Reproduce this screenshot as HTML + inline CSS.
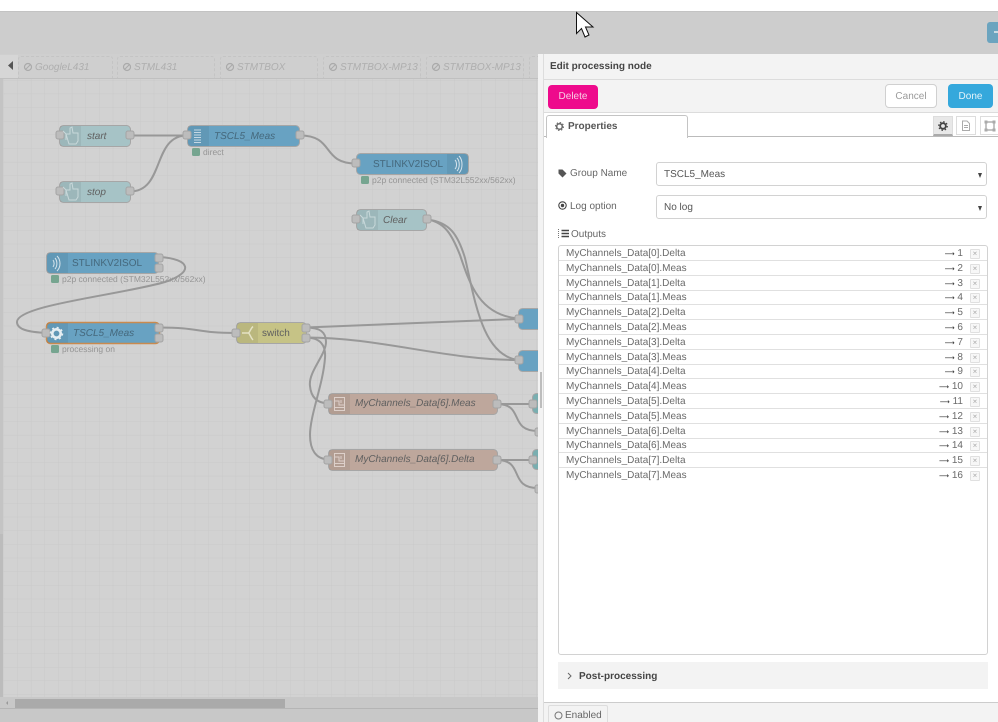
<!DOCTYPE html>
<html><head><meta charset="utf-8">
<style>
html,body{margin:0;padding:0;width:998px;height:722px;overflow:hidden;background:#fff;font-family:"Liberation Sans",sans-serif;text-rendering:geometricPrecision;}
svg text{text-rendering:geometricPrecision}
.a{position:absolute}
#stage{position:relative;width:998px;height:722px;overflow:hidden}
.tab{position:absolute;top:56px;height:22px;border:1px dashed #c4c4c4;border-bottom:none;border-radius:3px 3px 0 0;box-sizing:border-box;width:98px;background:#cfcfcf;color:#aeaeae;font-style:italic;font-size:10px;line-height:21px;padding-left:16px;white-space:nowrap;overflow:hidden}
.tab svg{position:absolute;left:4px;top:5px}
.row{position:absolute;left:559px;width:428px;height:15px;border-bottom:1px solid #e0e0e0;box-sizing:border-box;font-size:10px;color:#6a6a6a;line-height:15px;padding-left:7px}
.row b{position:absolute;right:24px;top:0;font-weight:normal;font-size:10px;white-space:nowrap}
.row u{text-decoration:none;font-family:"DejaVu Sans",sans-serif;font-size:7px;color:#333;margin-right:0}
.row i{position:absolute;left:411px;top:3px;width:8px;height:8px;border:1px solid #e0e0e0;border-radius:1px;font-style:normal;font-size:8px;line-height:8px;text-align:center;color:#aaa;background:#f7f7f7}
.btn{position:absolute;box-sizing:border-box;border-radius:4px;text-align:center;font-size:10px}
.sel{position:absolute;left:656px;width:331px;height:24px;border:1px solid #d2d2d2;border-radius:3px;box-sizing:border-box;background:#fff;font-size:10px;color:#555;line-height:23px;padding-left:7px}
.sel:after{content:"";position:absolute;right:4px;top:10px;border-left:2.5px solid transparent;border-right:2.5px solid transparent;border-top:5px solid #444}
.lbl{position:absolute;font-size:10px;color:#666;white-space:nowrap}
</style></head>
<body><div id="stage">
<div class="a" style="left:0;top:0;width:998px;height:11px;background:#fff"></div>
<div class="a" style="left:0;top:11px;width:998px;height:43px;background:#cdcdcd;border-top:1px solid #c3c3c3;box-sizing:border-box"></div>
<div class="a" style="left:987px;top:22px;width:11px;height:21px;background:#6ba4bf;border-radius:3px 0 0 3px"></div>
<div class="a" style="left:994px;top:31px;width:4px;height:2px;background:#c9dbe3"></div>

<svg class="a" style="left:0;top:54px;filter:blur(.35px)" width="540" height="668" viewBox="0 54 540 668">
<defs><pattern id="g" x="3.6" y="80" width="13.65" height="13.65" patternUnits="userSpaceOnUse"><path d="M0 0H13.65M0 0V13.65" stroke="#c9c9c9" stroke-width="1" fill="none"/></pattern></defs>
<rect x="0" y="54" width="540" height="668" fill="#d2d2d2"/>
<rect x="3" y="79" width="535" height="618" fill="url(#g)"/>
<rect x="0" y="79" width="3" height="455" fill="#c4c4c4"/>
<rect x="0" y="534" width="3" height="163" fill="#bcbcbc"/>
<rect x="0" y="54" width="538" height="25" fill="#cfcfcf"/>
<rect x="0" y="78" width="538" height="1" fill="#c0c0c0"/>
<rect x="0" y="55" width="18" height="23" fill="#d6d6d6"/>
<path d="M8 65.500L13 61V70Z" fill="#555"/>
<rect x="0" y="697" width="538" height="11" fill="#c8c8c8"/>
<rect x="15" y="699" width="270" height="9" fill="#aaaaaa"/>
<path d="M6 703L8 701V705Z" fill="#999"/>
<rect x="0" y="708" width="538" height="14" fill="#c8c8c8"/>
<rect x="0" y="708" width="538" height="1" fill="#b5b5b5"/>

<g fill="none" stroke="#989898" stroke-width="2">
<path d="M130 135.500H187"/>
<path d="M130 191.500C165 191.500 152 135.500 187 135.500"/>
<path d="M300 135.500C335 135.500 321 163.500 356 163.500"/>
<path d="M427 219.500C445 222 452 235 460 255C470 285 480 315 518 318.500"/>
<path d="M427 219.500C450 222 458 235 465 258C475 300 482 355 518 360"/>
<path d="M160 257C190 259 195 272 165 282C120 295 17 305 17 322C17 330 30 332 46 333"/>
<path d="M160 327.500C200 327.500 196 333 236 333"/>
<path d="M306 327.500L518 319"/>
<path d="M306 337.500C380 337.500 445 360 518 360"/>
<path d="M306 327.500C320 327.500 326 332 326 342C326 355 308 372 310 386C311 398 318 403 328 403.500"/>
<path d="M306 337.500C320 337.500 326 345 325 358C323 385 310 415 310 435C310 450 316 459 328 459.500"/>
<path d="M497 404H532"/>
<path d="M497 404C525 404 508 431 538 431"/>
<path d="M497 460H532"/>
<path d="M497 460C525 460 508 488 538 488"/>
</g>

<!-- nodes -->
<g stroke="#a6a6a6" stroke-width="1">
<rect x="59.500" y="125.500" width="71" height="21" rx="4" fill="#a6c3c6"/>
<rect x="59.500" y="181.500" width="71" height="21" rx="4" fill="#a6c3c6"/>
<rect x="356.500" y="209.500" width="70" height="21" rx="4" fill="#a6c3c6"/>
<rect x="187.500" y="125.500" width="112" height="21" rx="4" fill="#68a2c2"/>
<rect x="356.500" y="153.500" width="112" height="21" rx="4" fill="#68a2c2"/>
<rect x="46.500" y="252.500" width="112" height="21" rx="4" fill="#68a2c2"/>
<rect x="46.500" y="322.500" width="113" height="21" rx="4" fill="#68a2c2" stroke="#c98a4e" stroke-width="1.500"/>
<rect x="236.500" y="322.500" width="70" height="21" rx="4" fill="#c6c386"/>
<rect x="328.500" y="393.500" width="169" height="21" rx="4" fill="#bea79c"/>
<rect x="328.500" y="449.500" width="169" height="21" rx="4" fill="#bea79c"/>
<rect x="518.500" y="308.500" width="30" height="21" rx="4" fill="#68a2c2"/>
<rect x="518.500" y="350.500" width="30" height="21" rx="4" fill="#68a2c2"/>
<rect x="532.500" y="393.500" width="20" height="20" rx="4" fill="#79aeb0"/>
<rect x="532.500" y="449.500" width="20" height="20" rx="4" fill="#79aeb0"/>
</g>
<g fill="#000" fill-opacity=".06">
<rect x="60" y="126" width="21" height="20"/><rect x="60" y="182" width="21" height="20"/><rect x="357" y="210" width="21" height="20"/>
<rect x="188" y="126" width="21" height="20"/><rect x="447" y="154" width="21" height="20"/><rect x="47" y="253" width="21" height="20"/>
<rect x="47" y="323" width="21" height="20"/><rect x="237" y="323" width="21" height="20"/><rect x="329" y="394" width="21" height="20"/><rect x="329" y="450" width="21" height="20"/>
</g>
<!-- ports -->
<g fill="#bcbcbc" stroke="#a4a4a4" stroke-width="1">
<rect x="56" y="131" width="8" height="8" rx="2"/><rect x="126" y="131" width="8" height="8" rx="2"/>
<rect x="56" y="187" width="8" height="8" rx="2"/><rect x="126" y="187" width="8" height="8" rx="2"/>
<rect x="183" y="131" width="8" height="8" rx="2"/><rect x="296" y="131" width="8" height="8" rx="2"/>
<rect x="352" y="159" width="8" height="8" rx="2"/>
<rect x="352" y="215" width="8" height="8" rx="2"/><rect x="423" y="215" width="8" height="8" rx="2"/>
<rect x="155" y="254" width="8" height="8" rx="2"/><rect x="155" y="264" width="8" height="8" rx="2"/>
<rect x="42" y="329" width="8" height="8" rx="2"/><rect x="155" y="324" width="8" height="8" rx="2"/><rect x="155" y="334" width="8" height="8" rx="2"/>
<rect x="232" y="329" width="8" height="8" rx="2"/><rect x="302" y="324" width="8" height="8" rx="2"/><rect x="302" y="334" width="8" height="8" rx="2"/>
<rect x="324" y="400" width="8" height="8" rx="2"/><rect x="493" y="400" width="8" height="8" rx="2"/>
<rect x="324" y="456" width="8" height="8" rx="2"/><rect x="493" y="456" width="8" height="8" rx="2"/>
<rect x="515" y="315" width="8" height="8" rx="2"/><rect x="515" y="356" width="8" height="8" rx="2"/>
<rect x="529" y="400" width="8" height="8" rx="2"/><rect x="529" y="456" width="8" height="8" rx="2"/>
<rect x="535" y="428" width="8" height="8" rx="2"/><rect x="535" y="485" width="8" height="8" rx="2"/>
</g>
<!-- hand icons -->
<g fill="none" stroke="#c8d8da" stroke-width="1">
<path d="M66 140V134L63 131M66 134H70V128L72 127L73 133H78V141L76 144H69Z"/>
<path d="M66 196V190L63 187M66 190H70V184L72 183L73 189H78V197L76 200H69Z"/>
<path d="M363 224V218L360 215M363 218H367V212L369 211L370 217H375V225L373 228H366Z"/>
</g>
<!-- list icon -->
<g stroke="#c4d8e4" stroke-width="1"><path d="M194 130H201M194 132.500H201M194 135H201M194 137.500H201M194 140H201M194 142.500H201"/></g>
<!-- wave icons -->
<g fill="none" stroke="#d6e4ec" stroke-width="1">
<path d="M455 160C457 162 457 167 455 169M457 158C460 161 460 168 457 171M459 156C463 160 463 169 459 173"/>
<path d="M53 260C54.500 262 54.500 265 53 267M55 258C57.500 261 57.500 266 55 269M57 256C61 260 61 267 57 271"/>
</g>
<!-- gear -->
<circle cx="56.500" cy="333.500" r="4.200" fill="none" stroke="#e6eef2" stroke-width="2.600"/>
<circle cx="56.500" cy="333.500" r="6" fill="none" stroke="#e6eef2" stroke-width="1.500" stroke-dasharray="2 2.700"/>
<!-- switch icon -->
<path d="M242 333H248C250 333 250 329 253 326.500M248 333C250 333 250 337 253 340" fill="none" stroke="#e4e2c4" stroke-width="1.500"/>
<!-- function icons -->
<g fill="none" stroke="#ddd0ca" stroke-width="1">
<rect x="334.500" y="397.500" width="10" height="13"/><path d="M335 401H339V405H344M341 400V403M335 407.500H344"/>
<rect x="334.500" y="453.500" width="10" height="13"/><path d="M335 457H339V461H344M341 456V459M335 463.500H344"/>
</g>
<!-- text -->
<g font-family="Liberation Sans, sans-serif" font-size="10" fill="#606060">
<text x="87" y="139" font-style="italic">start</text>
<text x="87" y="195" font-style="italic">stop</text>
<text x="383" y="223" font-style="italic">Clear</text>
<text x="214" y="139" font-style="italic" fill="#45687c">TSCL5_Meas</text>
<text x="373" y="167" fill="#45687c">STLINKV2ISOL</text>
<text x="72" y="266" fill="#45687c">STLINKV2ISOL</text>
<text x="73" y="336" font-style="italic" fill="#45687c">TSCL5_Meas</text>
<text x="262" y="336">switch</text>
<text x="355" y="406" font-style="italic">MyChannels_Data[6].Meas</text>
<text x="355" y="462" font-style="italic">MyChannels_Data[6].Delta</text>
</g>
<!-- status -->
<g fill="#76a590">
<rect x="192" y="148" width="8" height="8" rx="1.500"/>
<rect x="361" y="176" width="8" height="8" rx="1.500"/>
<rect x="51" y="275" width="8" height="8" rx="1.500"/>
<rect x="51" y="345" width="8" height="8" rx="1.500"/>
</g>
<g font-family="Liberation Sans, sans-serif" font-size="8.500" fill="#959595">
<text x="203" y="155">direct</text>
<text x="372" y="183">p2p connected (STM32L552xx/562xx)</text>
<text x="62" y="282">p2p connected (STM32L552xx/562xx)</text>
<text x="62" y="352">processing on</text>
</g>
</svg>

<div class="tab" style="left:18px;width:95px">GoogleL431<svg width="10" height="10"><circle cx="5" cy="5" r="3.500" fill="none" stroke="#aaa" stroke-width="1.200"/><path d="M2.500 7.500L7.500 2.500" stroke="#aaa"/></svg></div>
<div class="tab" style="left:117px">STML431<svg width="10" height="10"><circle cx="5" cy="5" r="3.500" fill="none" stroke="#aaa" stroke-width="1.200"/><path d="M2.500 7.500L7.500 2.500" stroke="#aaa"/></svg></div>
<div class="tab" style="left:220px">STMTBOX<svg width="10" height="10"><circle cx="5" cy="5" r="3.500" fill="none" stroke="#aaa" stroke-width="1.200"/><path d="M2.500 7.500L7.500 2.500" stroke="#aaa"/></svg></div>
<div class="tab" style="left:323px">STMTBOX-MP13<svg width="10" height="10"><circle cx="5" cy="5" r="3.500" fill="none" stroke="#aaa" stroke-width="1.200"/><path d="M2.500 7.500L7.500 2.500" stroke="#aaa"/></svg></div>
<div class="tab" style="left:426px">STMTBOX-MP13<svg width="10" height="10"><circle cx="5" cy="5" r="3.500" fill="none" stroke="#aaa" stroke-width="1.200"/><path d="M2.500 7.500L7.500 2.500" stroke="#aaa"/></svg></div>
<div class="tab" style="left:529px;width:12px;padding:0"></div>

<!-- panel -->
<div class="a" style="left:538px;top:54px;width:460px;height:668px;background:#fff"></div>
<div class="a" style="left:538px;top:54px;width:6px;height:668px;background:#f3f3f3;border-right:1px solid #ddd;box-sizing:border-box"></div>
<div class="a" style="left:540px;top:372px;width:2px;height:36px;background:#bdbdbd"></div>
<div class="a" style="left:544px;top:54px;width:454px;height:26px;background:#f3f3f3;border-bottom:1px solid #dcdcdc;box-sizing:border-box;font-size:10px;font-weight:bold;color:#444;line-height:26px;padding-left:6px">Edit processing node</div>
<div class="a" style="left:544px;top:80px;width:454px;height:33px;background:#f3f3f3;border-bottom:1px solid #dcdcdc;box-sizing:border-box"></div>
<div class="btn" style="left:548px;top:85px;width:50px;height:24px;background:#ee0a8c;color:#f8d0e6;line-height:24px">Delete</div>
<div class="btn" style="left:885px;top:84px;width:52px;height:24px;background:#fff;border:1px solid #d0d0d0;color:#999;line-height:24px">Cancel</div>
<div class="btn" style="left:948px;top:84px;width:45px;height:24px;background:#35a8dc;color:#e4f3fa;line-height:25px">Done</div>
<div class="a" style="left:544px;top:136px;width:454px;height:1px;background:#bbb"></div>
<div class="a" style="left:546px;top:115px;width:142px;height:23px;background:#fff;border:1px solid #c4c4c4;border-bottom:none;border-radius:3px 3px 0 0;box-sizing:border-box;font-size:10px;font-weight:bold;color:#555;line-height:21px;padding-left:21px">Properties
<svg class="a" style="left:8px;top:6px" width="9" height="9"><circle cx="4.500" cy="4.500" r="2.800" fill="none" stroke="#666" stroke-width="1.500"/><circle cx="4.500" cy="4.500" r="4" fill="none" stroke="#666" stroke-width="1" stroke-dasharray="1.500 1.640"/></svg></div>
<div class="a" style="left:933px;top:116px;width:20px;height:20px;background:#e8e8e8;border:1px solid #ddd;border-bottom:2px solid #aaa;box-sizing:border-box">
<svg class="a" style="left:4px;top:4px" width="10" height="10"><circle cx="5" cy="5" r="2.800" fill="none" stroke="#444" stroke-width="1.800"/><circle cx="5" cy="5" r="4.300" fill="none" stroke="#444" stroke-width="1.200" stroke-dasharray="1.500 1.880"/></svg></div>
<div class="a" style="left:956px;top:116px;width:20px;height:19px;background:#fff;border:1px solid #ddd;box-sizing:border-box">
<svg class="a" style="left:4px;top:3px" width="10" height="12"><path d="M1.500 1H6L8.500 3.500V10.500H1.500Z M3 5.500H7M3 7.500H7" fill="none" stroke="#aaa"/></svg></div>
<div class="a" style="left:980px;top:116px;width:20px;height:19px;background:#fff;border:1px solid #ddd;box-sizing:border-box">
<svg class="a" style="left:3px;top:3px" width="12" height="12"><rect x="2" y="2" width="8" height="8" fill="none" stroke="#888"/><rect x="0.500" y="0.500" width="3" height="3" fill="#aaa"/><rect x="8.500" y="0.500" width="3" height="3" fill="#aaa"/><rect x="0.500" y="8.500" width="3" height="3" fill="#aaa"/><rect x="8.500" y="8.500" width="3" height="3" fill="#aaa"/></svg></div>

<svg class="a" style="left:558px;top:169px" width="9" height="9"><path d="M0.500 0.500H4.500L8.500 4.500L4.500 8.500L0.500 4.500Z" fill="#555"/></svg>
<div class="lbl" style="left:570px;top:168px">Group Name</div>
<div class="sel" style="top:162px">TSCL5_Meas</div>
<svg class="a" style="left:558px;top:201px" width="9" height="9"><circle cx="4.500" cy="4.500" r="3.700" fill="none" stroke="#444" stroke-width="1.100"/><circle cx="4.500" cy="4.500" r="1.700" fill="#444"/></svg>
<div class="lbl" style="left:570px;top:201px">Log option</div>
<div class="sel" style="top:195px">No log</div>
<svg class="a" style="left:558px;top:229px" width="11" height="10"><path d="M3.500 1.500H11M3.500 4.500H11M3.500 7.500H11" stroke="#444" stroke-width="1.500"/><path d="M.5 0V10" stroke="#777" stroke-dasharray="1 1"/></svg>
<div class="lbl" style="left:571px;top:229px">Outputs</div>

<div class="a" style="left:558px;top:245px;width:430px;height:410px;border:1px solid #d2d2d2;border-radius:3px;box-sizing:border-box;background:#fff"></div>
<div class="row" style="top:246px">MyChannels_Data[0].Delta<b><u>⟶</u> 1</b><i>×</i></div>
<div class="row" style="top:260.800px">MyChannels_Data[0].Meas<b><u>⟶</u> 2</b><i>×</i></div>
<div class="row" style="top:275.600px">MyChannels_Data[1].Delta<b><u>⟶</u> 3</b><i>×</i></div>
<div class="row" style="top:290.400px">MyChannels_Data[1].Meas<b><u>⟶</u> 4</b><i>×</i></div>
<div class="row" style="top:305.200px">MyChannels_Data[2].Delta<b><u>⟶</u> 5</b><i>×</i></div>
<div class="row" style="top:320px">MyChannels_Data[2].Meas<b><u>⟶</u> 6</b><i>×</i></div>
<div class="row" style="top:334.800px">MyChannels_Data[3].Delta<b><u>⟶</u> 7</b><i>×</i></div>
<div class="row" style="top:349.600px">MyChannels_Data[3].Meas<b><u>⟶</u> 8</b><i>×</i></div>
<div class="row" style="top:364.400px">MyChannels_Data[4].Delta<b><u>⟶</u> 9</b><i>×</i></div>
<div class="row" style="top:379.200px">MyChannels_Data[4].Meas<b><u>⟶</u> 10</b><i>×</i></div>
<div class="row" style="top:394px">MyChannels_Data[5].Delta<b><u>⟶</u> 11</b><i>×</i></div>
<div class="row" style="top:408.800px">MyChannels_Data[5].Meas<b><u>⟶</u> 12</b><i>×</i></div>
<div class="row" style="top:423.600px">MyChannels_Data[6].Delta<b><u>⟶</u> 13</b><i>×</i></div>
<div class="row" style="top:438.400px">MyChannels_Data[6].Meas<b><u>⟶</u> 14</b><i>×</i></div>
<div class="row" style="top:453.200px">MyChannels_Data[7].Delta<b><u>⟶</u> 15</b><i>×</i></div>
<div class="row" style="top:468px;border-bottom:none">MyChannels_Data[7].Meas<b><u>⟶</u> 16</b><i>×</i></div>

<div class="a" style="left:558px;top:662px;width:430px;height:27px;background:#f3f3f3;font-size:10px;font-weight:bold;color:#444;line-height:29px;padding-left:21px;box-sizing:border-box">Post-processing</div>
<svg class="a" style="left:567px;top:672px" width="5" height="8"><path d="M1 1L4 4L1 7" fill="none" stroke="#666"/></svg>
<div class="a" style="left:544px;top:702px;width:454px;height:20px;background:#f3f3f3;border-top:1px solid #ccc;box-sizing:border-box"></div>
<div class="a" style="left:548px;top:705px;width:60px;height:17px;background:#f3f3f3;border:1px solid #ddd;border-bottom:none;border-radius:2px 2px 0 0;box-sizing:border-box;font-size:10px;color:#666;line-height:19px;padding-left:16px">Enabled
<svg class="a" style="left:5px;top:5px" width="9" height="9"><circle cx="4.500" cy="4.500" r="3.500" fill="none" stroke="#777"/></svg></div>

<!-- cursor -->
<svg class="a" style="left:574px;top:10px" width="24" height="30"><path d="M2.500 2.500V23.500L7.500 18.500L11 27L15 25L11.500 17H19Z" fill="#fff" stroke="#111" stroke-width="1"/></svg>
</div></body></html>
